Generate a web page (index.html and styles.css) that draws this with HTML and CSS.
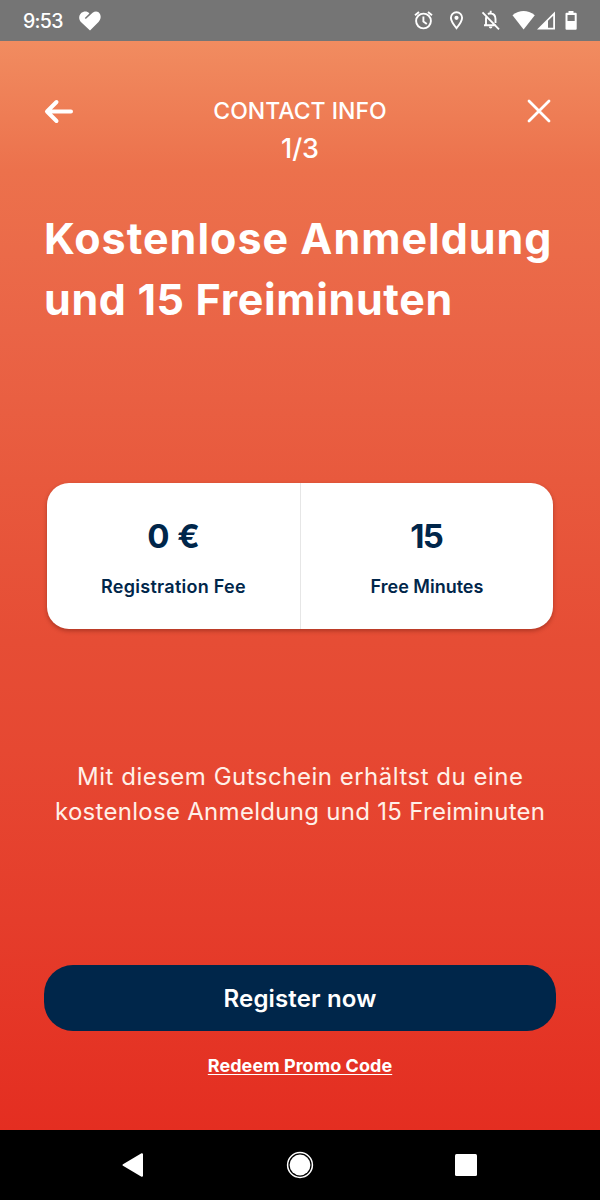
FILE: index.html
```html
<!DOCTYPE html>
<html lang="de">
<head>
<meta charset="utf-8">
<title>Contact Info</title>
<link rel="stylesheet" href="styles.css">
</head>
<body>
<div class="status-bar">
  <span class="time">9:53</span>
  <svg class="heart" width="24" height="22" viewBox="0 0 24 22"><path fill="#fff" d="M12 20.5 L3.2 12.2 C-.3 8.5 1 3.3 5.1 1.9 C7.6 1.1 9.8 1.7 11.4 3.4 L6.8 8 L7.8 9 L14.6 2.7 C17.3 .8 20.5 1.2 22 4 C23.3 6.6 22.6 9.8 20.5 12 Z"/></svg>
  <svg class="status-icons" width="170" height="24" viewBox="410 8 170 24" fill="none" stroke="#fff" stroke-width="1.9">
    <circle cx="423.5" cy="21" r="7.4"/><path d="M423.4 16.5v5l3.4 2.6M415 15.2l4-3.3M428 11.9l4 3.3"/>
    <path d="M456.5 28.2c-3-3.6-5.6-7-5.6-10.4a5.6 5.6 0 0 1 11.2 0c0 3.4-2.6 6.8-5.6 10.4z"/><circle cx="456.5" cy="17.8" r="2.1" fill="#fff" stroke="none"/>
    <path d="M482.5 12.3l16.5 17M484 25.2h12M486 25v-6.5q0-1 .4-2M488 14.2q1-.8 2.5-.9 5 .5 5 5.8v3.8M490.7 10.8v2.7"/><path d="M488.8 26.6h3.7q-.3 2-1.9 2t-1.8-2z" fill="#fff" stroke="none"/>
    <path d="M512.5 15.2Q523.5 7 534.8 15.2L523.6 29.4z" fill="#fff" stroke="none"/>
    <path fill="#fff" fill-rule="evenodd" stroke="none" d="M537 29.5L555 11.6V29.5zM548 20.8V27.8H553.2V15.7z"/>
    <path fill="#fff" fill-rule="evenodd" stroke="none" d="M568.5 11h5v1.7h2.2q1 0 1 1v15q0 1-1 1h-9.2q-1 0-1-1v-15q0-1 1-1h2zM567.5 15v6h7.2v-6z"/>
  </svg>
</div>
<main class="screen">
  <header class="top">
    <svg class="nav-icon" width="30" height="28" viewBox="0 0 30 28"><path d="M27 14.5H3.5M12.5 5L3 14.5l9.5 9.5" fill="none" stroke="#fff" stroke-width="4" stroke-linecap="round" stroke-linejoin="round"/></svg>
    <div class="step"><div class="step-title"><span class="t-contact">CONTACT INFO</span></div><div class="step-count"><span class="t-count">1/3</span></div></div>
    <svg class="nav-icon" width="26" height="28" viewBox="0 0 26 28"><path d="M3 4L23 24M23 4L3 24" fill="none" stroke="#fff" stroke-width="2.8" stroke-linecap="round"/></svg>
  </header>
  <h1 class="headline"><span class="t-h1">Kostenlose Anmeldung</span><br><span class="t-h2">und 15 Freiminuten</span></h1>
  <section class="card">
    <div class="cell"><div class="value">0 €</div><div class="label"><span class="t-fee">Registration Fee</span></div></div>
    <div class="cell"><div class="value"><span class="t-fifteen">15</span></div><div class="label"><span class="t-free">Free Minutes</span></div></div>
  </section>
  <p class="note"><span class="t-n1">Mit diesem Gutschein erhältst du eine</span><br><span class="t-n2">kostenlose Anmeldung und 15 Freiminuten</span></p>
  <button class="register"><span class="t-register">Register now</span></button>
  <a class="promo"><span class="t-promo">Redeem Promo Code</span></a>
</main>
<nav class="system-nav">
  <svg width="22" height="26" viewBox="0 0 22 26"><path d="M1.5 13L20 2.2V23.8z" fill="#fff" stroke="#fff" stroke-width="2" stroke-linejoin="round"/></svg>
  <svg width="28" height="28" viewBox="0 0 28 28"><circle cx="14" cy="14" r="12.4" fill="none" stroke="#fff" stroke-width="1.5"/><circle cx="14" cy="14" r="10.4" fill="#fff"/></svg>
  <svg width="22" height="22" viewBox="0 0 22 22"><rect width="22" height="22" rx="1.5" fill="#fff"/></svg>
</nav>
</body>
</html>
```
FILE: styles.css
```css
* { box-sizing: border-box; }
body {
  margin: 0;
  width: 600px;
  height: 1200px;
  display: flex;
  flex-direction: column;
  overflow: hidden;
  font-family: Inter, "Liberation Sans", sans-serif;
  color: #fff;
}
svg { display: block; }
.status-bar {
  height: 41px;
  background: #757575;
  display: flex;
  align-items: center;
  padding: 0 20px 0 23px;
}
.time { font-size: 19.5px; font-weight: 500; width: 55px; letter-spacing: -0.7px; }
.status-icons { margin-left: auto; margin-top: -1px; }
.screen {
  height: 1089px;
  display: flex;
  flex-direction: column;
  padding: 54px 44px 0;
  background: linear-gradient(#f18c60 0, #ec714c 130px, #ea6446 290px, #e8593d 440px, #e64d35 600px, #e64832 710px, #e53d2b 880px, #e42e21 1089px);
}
.top {
  height: 74px;
  display: flex;
  justify-content: space-between;
  align-items: flex-start;
}
.nav-icon { margin-top: 2px; }
.top .nav-icon:last-child { margin-right: 4px; }
.step { text-align: center; }
.step-title { font-size: 23px; line-height: 32px; font-weight: 500; }
.step-count { font-size: 27px; line-height: 44px; font-weight: 500; }
.headline {
  margin: 39px 0 0;
  font-size: 43px;
  line-height: 61px;
  font-weight: 700;
  white-space: nowrap;
}
.t-h1 { letter-spacing: 1px; }
.t-h2 { letter-spacing: 0.65px; }
.card {
  margin: 153px 3px 0;
  height: 146px;
  display: grid;
  grid-template-columns: 253px 1fr;
  background: #fff;
  border-radius: 22px;
  box-shadow: 0 2px 4px rgba(90, 20, 10, .4);
  color: #00264a;
  text-align: center;
}
.cell { padding-top: 33px; }
.cell + .cell { border-left: 1px solid #e6e6e6; }
.value { font-size: 33px; line-height: 40px; font-weight: 700; }
.t-fifteen { letter-spacing: -1.8px; margin-right: 1.8px; }
.label { margin-top: 19px; font-size: 18px; line-height: 24px; font-weight: 600; }
.t-fee { letter-spacing: 0.27px; }
.note {
  margin: 130px 0 0;
  font-size: 24px;
  line-height: 35px;
  color: #fff0e8;
  text-align: center;
  white-space: nowrap;
}
.t-n1 { letter-spacing: 0.5px; margin-right: -0.5px; }
.t-n2 { letter-spacing: 0.29px; margin-right: -0.3px; }
.register {
  margin: 136px 0 0;
  height: 66px;
  border: 0;
  border-radius: 29px;
  background: #00264a;
  color: #fff;
  font-family: inherit;
  font-size: 24px;
  font-weight: 600;
}
.t-register { letter-spacing: 0.15px; }
.promo {
  margin-top: 23px;
  align-self: center;
  font-size: 18px;
  line-height: 24px;
  font-weight: 700;
}
.t-promo {
  letter-spacing: 0.05px;
  text-decoration: underline;
  text-decoration-thickness: 1.3px;
  text-underline-offset: 2px;
  text-decoration-skip-ink: none;
}
.system-nav {
  height: 70px;
  background: #000;
  display: flex;
  justify-content: space-between;
  align-items: center;
  padding: 0 123px 0 122px;
}
```
